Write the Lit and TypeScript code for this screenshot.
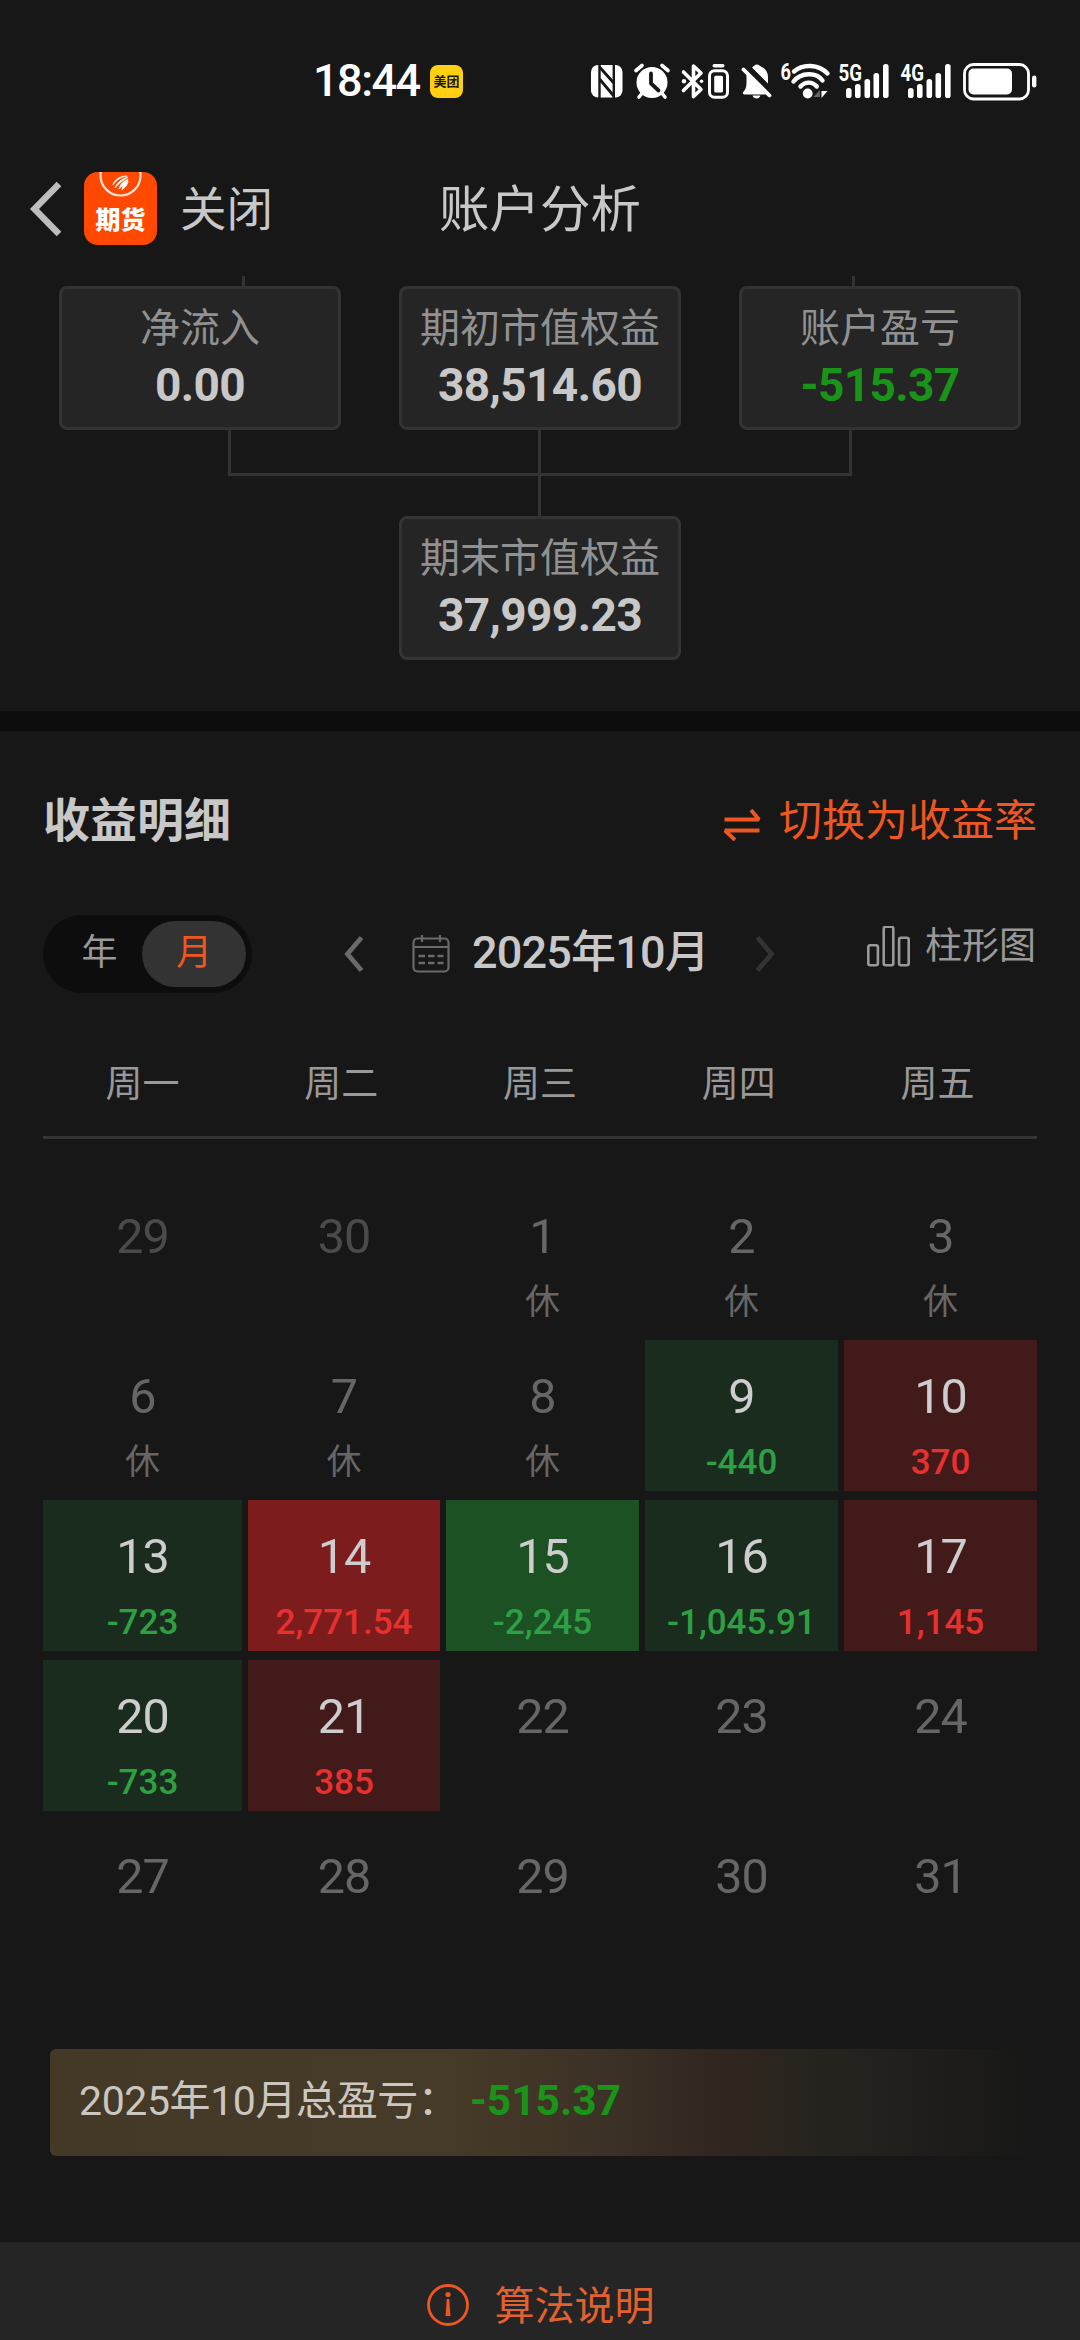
import { LitElement, html, svg, css } from "lit";
import { customElement, property } from "lit/decorators.js";
import { classMap } from "lit/directives/class-map.js";

type Tone = "faded" | "idle" | "up" | "up-strong" | "down" | "down-strong";

interface Day {
  day: number;
  tone: Tone;
  note?: string;
}

const WEEKDAYS = ["周一", "周二", "周三", "周四", "周五"];

const DAYS: Day[] = [
  { day: 29, tone: "faded" },
  { day: 30, tone: "faded" },
  { day: 1, tone: "idle", note: "休" },
  { day: 2, tone: "idle", note: "休" },
  { day: 3, tone: "idle", note: "休" },
  { day: 6, tone: "idle", note: "休" },
  { day: 7, tone: "idle", note: "休" },
  { day: 8, tone: "idle", note: "休" },
  { day: 9, tone: "down", note: "-440" },
  { day: 10, tone: "up", note: "370" },
  { day: 13, tone: "down", note: "-723" },
  { day: 14, tone: "up-strong", note: "2,771.54" },
  { day: 15, tone: "down-strong", note: "-2,245" },
  { day: 16, tone: "down", note: "-1,045.91" },
  { day: 17, tone: "up", note: "1,145" },
  { day: 20, tone: "down", note: "-733" },
  { day: 21, tone: "up", note: "385" },
  { day: 22, tone: "idle" },
  { day: 23, tone: "idle" },
  { day: 24, tone: "idle" },
  { day: 27, tone: "idle" },
  { day: 28, tone: "idle" },
  { day: 29, tone: "idle" },
  { day: 30, tone: "idle" },
  { day: 31, tone: "idle" },
];

@customElement("status-bar")
class StatusBar extends LitElement {
  static styles = css`
    :host {
      display: flex;
      align-items: center;
      box-sizing: border-box;
      height: 160px;
      padding: 2px 0 0 313px;
      color: #fff;
      font-family: Roboto, "Noto Sans CJK SC", sans-serif;
    }
    svg {
      display: block;
      flex: none;
      overflow: visible;
    }
    .clock {
      flex: none;
      width: 117px;
      font-size: 45px;
      font-weight: 500;
      line-height: 60px;
      letter-spacing: -1.5px;
      white-space: nowrap;
    }
    .badge {
      flex: none;
      width: 33px;
      height: 33px;
      margin-right: 128px;
      border-radius: 8px;
      background: #ffd012;
      color: #1d1a08;
      font-size: 13px;
      font-weight: 700;
      line-height: 34px;
      text-align: center;
      white-space: nowrap;
    }
    .tag {
      font-size: 24px;
      font-weight: 700;
    }
    .nfc { margin-right: 11px; }
    .alarm { margin-right: 12px; }
    .bt { margin-right: 4px; }
    .device { margin-right: 12px; }
    .bell { margin-right: 8px; }
    .wifi { margin-right: 9px; }
    .signal { margin-right: 11px; }
  `;

  private signal(label: string) {
    const bars = [
      [7, 27],
      [16, 23],
      [25.5, 18],
      [34.5, 12],
      [44, 3],
    ];
    return html`<svg class="signal" width="51" height="40" viewBox="0 0 51 40">
      ${bars.map(([x, y]) => svg`<rect x=${x} y=${y} width="5.6" height=${37 - y} rx="2.6" fill="#fff"/>`)}
      <text class="tag" x="-0.5" y="20" fill="#fff" textLength="23.5" lengthAdjust="spacingAndGlyphs">${label}</text>
    </svg>`;
  }

  render() {
    return html`
      <span class="clock">18:44</span>
      <span class="badge">美团</span>
      <svg class="nfc" width="32" height="40" viewBox="0 0 32 40">
        <rect x="0" y="4" width="31.5" height="32.5" rx="7" fill="#fff" />
        <path d="M8.5 3.5V37 M22.8 3.5V37" stroke="#171717" stroke-width="2.4" />
        <path d="M8.5 6 L22.8 22 M8.5 18 L22.8 35" stroke="#171717" stroke-width="2.8" />
      </svg>
      <svg class="alarm" width="36" height="40" viewBox="0 0 36 40">
        <circle cx="18" cy="21.5" r="15.5" fill="#fff" />
        <path d="M2 9.5 8 4.5 M34 9.5 28 4.5 M5 36l4-5 M31 36l-4-5" stroke="#fff" stroke-width="3.6" stroke-linecap="round" />
        <path d="M17 12.5v10l7.5 7" fill="none" stroke="#171717" stroke-width="3.8" stroke-linecap="round" />
      </svg>
      <svg class="bt" width="22" height="40" viewBox="0 0 22 40">
        <path d="M1.5 11 19 28.5 11.5 35.5V5L19 12 1.5 29.5" fill="none" stroke="#fff" stroke-width="3.6" stroke-linejoin="round" stroke-linecap="round" />
        <circle cx="2" cy="20.2" r="2.2" fill="#fff" />
        <circle cx="19.5" cy="20.2" r="1.8" fill="#fff" />
      </svg>
      <svg class="device" width="21" height="40" viewBox="0 0 21 40">
        <rect x="4.5" y="3" width="12" height="3.6" rx="1.8" fill="#fff" />
        <rect x="1.5" y="9.8" width="18" height="26.4" rx="5" fill="none" stroke="#fff" stroke-width="3" />
        <rect x="6.2" y="14.8" width="8.8" height="16.6" rx="1.5" fill="#fff" />
      </svg>
      <svg class="bell" width="31" height="40" viewBox="0 0 31 40">
        <path d="M11 6.5c2-1.3 2.6-3 5-3 1.8 0 2.6 1.2 3.5 1.7 5 2 7.5 5.8 7.5 10.8v6.5z" fill="#fff" />
        <path d="M5.5 12.5 25 33.5H3.5c-1.5 0-2.2-1.5-1.2-2.6 2.3-2.6 3.2-5.4 3.2-9z" fill="#fff" />
        <path d="M11.5 34.5h8c-.6 2-2 3-4 3s-3.4-1-4-3z" fill="#fff" />
        <path d="M2.5 8.5 28.5 34.5" stroke="#fff" stroke-width="3.8" stroke-linecap="round" />
      </svg>
      <svg class="wifi" width="50" height="40" viewBox="0 0 50 40">
        <text class="tag" x="0.5" y="18.5" fill="#fff" textLength="10.5" lengthAdjust="spacingAndGlyphs">6</text>
        <path d="M14 10.5C22.5 2.8 38.5 2.8 47.5 12.5 M13.5 20.5C21 11 36.5 11 42.5 19.5 M20.5 25.5c4.3-5.2 12-5.2 16.3 0" fill="none" stroke="#fff" stroke-width="4.4" stroke-linecap="round" />
        <circle cx="27.7" cy="32.5" r="4.9" fill="#fff" />
        <path d="M33.5 36 40 29v7z" fill="#666" />
        <path d="M41.5 30h6l-6 7z" fill="#fff" />
      </svg>
      ${this.signal("5G")} ${this.signal("4G")}
      <svg width="74" height="40" viewBox="0 0 74 40">
        <rect x="1.5" y="3.5" width="64" height="34.5" rx="9" fill="none" stroke="#fff" stroke-width="2.8" />
        <rect x="5.5" y="7.5" width="43.5" height="26" rx="5" fill="#fff" />
        <rect x="69" y="14.5" width="4.4" height="12" rx="2.2" fill="#fff" />
      </svg>
    `;
  }
}

@customElement("value-card")
class ValueCard extends LitElement {
  @property() label = "";
  @property() value = "";
  @property({ type: Boolean }) negative = false;

  static styles = css`
    :host {
      display: block;
      box-sizing: border-box;
      width: 282px;
      height: 144px;
      padding-top: 13px;
      border: 3px solid #333;
      border-radius: 8px;
      background: #252525;
      text-align: center;
      font-family: Roboto, "Noto Sans CJK SC", sans-serif;
      white-space: nowrap;
    }
    .label {
      font-size: 40px;
      line-height: 54px;
      color: #919191;
    }
    .value {
      font-size: 46px;
      font-weight: 700;
      line-height: 58px;
      letter-spacing: -0.6px;
      color: #c8c8c8;
    }
    .negative {
      color: #1a9418;
    }
  `;

  render() {
    return html`
      <div class="label">${this.label}</div>
      <div class=${classMap({ value: true, negative: this.negative })}>${this.value}</div>
    `;
  }
}

@customElement("day-cell")
class DayCell extends LitElement {
  @property({ attribute: false }) data!: Day;

  static styles = css`
    :host {
      display: block;
      min-width: 0;
    }
    .cell {
      box-sizing: border-box;
      height: 151px;
      padding-top: 27px;
      text-align: center;
      white-space: nowrap;
      font-family: Roboto, "Noto Sans CJK SC", sans-serif;
      color: #666;
    }
    .num {
      font-size: 48.5px;
      line-height: 60px;
      letter-spacing: -1px;
    }
    .note {
      margin-top: 11px;
      font-size: 35px;
      line-height: 50px;
    }
    .faded { color: #4a4a4a; }
    .up, .up-strong, .down, .down-strong { color: #cdcdcd; }
    .up { background: #421a1a; }
    .up-strong { background: #7c1c1d; }
    .down { background: #1a2c1d; }
    .down-strong { background: #1c5124; }
    .up .note, .up-strong .note { color: #e8302f; font-weight: 500; }
    .down .note, .down-strong .note { color: #2ea044; font-weight: 500; }
  `;

  render() {
    const { day, tone, note } = this.data;
    return html`<div class="cell ${tone}">
      <div class="num">${day}</div>
      ${note ? html`<div class="note">${note}</div>` : null}
    </div>`;
  }
}

@customElement("app-root")
class AppRoot extends LitElement {
  static styles = css`
    :host {
      display: flex;
      flex-direction: column;
      width: 1080px;
      height: 2340px;
      overflow: hidden;
      background: #171717;
      color: #c8c8c8;
      font-family: Roboto, "Noto Sans CJK SC", sans-serif;
      white-space: nowrap;
    }
    svg {
      display: block;
      flex: none;
    }
    .nav {
      display: grid;
      grid-template-columns: 1fr auto 1fr;
      align-items: center;
      height: 97px;
      padding: 0 28px;
    }
    .nav-left {
      display: flex;
      align-items: center;
    }
    .app-icon { margin: 0 23px 0 20px; }
    .app-name { font-size: 25px; font-weight: 900; }
    .close {
      padding-top: 3px;
      font-size: 46.5px;
      line-height: 60px;
    }
    .title {
      padding-top: 3px;
      font-size: 50.5px;
      line-height: 64px;
    }
    .tree {
      display: flex;
      flex-direction: column;
      align-items: center;
      padding: 19px 0 51px;
    }
    .cards {
      display: flex;
      gap: 58px;
    }
    .divider {
      height: 20px;
      background: #0d0d0d;
    }
    .detail {
      display: flex;
      flex-direction: column;
      padding: 58px 43px 0;
    }
    .heading {
      display: flex;
      align-items: center;
      justify-content: space-between;
      height: 64px;
    }
    .heading-text {
      font-size: 47px;
      font-weight: 700;
      line-height: 64px;
    }
    .switch {
      display: flex;
      align-items: center;
      gap: 18px;
      color: #ee5622;
      font-size: 43px;
      line-height: 64px;
    }
    .switch-icon { margin-top: 5px; }
    .controls {
      display: flex;
      align-items: center;
      height: 78px;
      margin-top: 62px;
    }
    .toggle {
      display: flex;
      box-sizing: border-box;
      width: 209px;
      height: 78px;
      padding: 6px;
      border-radius: 39px;
      background: #0d0d0d;
      font-size: 36px;
      line-height: 65px;
      text-align: center;
    }
    .option {
      flex: 1;
      padding-left: 8px;
      color: #999;
    }
    .option.active {
      flex: none;
      width: 104px;
      padding-left: 0;
      border-radius: 33px;
      background: #333;
      color: #ee5622;
    }
    .prev { margin-left: 92px; }
    .calendar { margin: 0 22px 0 48px; }
    .month {
      width: 230px;
      font-size: 45px;
      line-height: 60px;
      font-weight: 500;
      letter-spacing: -0.8px;
      padding-bottom: 2px;
    }
    .next { margin-left: 53px; }
    .chart {
      display: flex;
      align-items: center;
      align-self: flex-start;
      gap: 15px;
      height: 63px;
      margin-left: auto;
      margin-right: 1px;
      color: #999;
      font-size: 37px;
      line-height: 60px;
    }
    .weekdays {
      display: grid;
      grid-template-columns: repeat(5, 1fr);
      margin-top: 67px;
      padding-bottom: 26px;
      border-bottom: 3px solid #333;
      font-size: 37px;
      line-height: 50px;
      color: #999;
      text-align: center;
    }
    .days {
      display: grid;
      grid-template-columns: 199px 192px repeat(3, 193px);
      gap: 9px 6px;
      margin-top: 41px;
    }
    .summary {
      display: flex;
      box-sizing: border-box;
      height: 107px;
      margin: 78px 45px 86px 50px;
      padding: 22px 0 0 29px;
      border-radius: 6px;
      background: linear-gradient(90deg, #443927 0%, #463a28 40%, #3c3126 57%, #30261f 68%, #25231e 80%, #171717 100%);
      font-size: 41px;
      line-height: 60px;
    }
    .summary-label {
      width: 391px;
      letter-spacing: -0.4px;
      color: #cbc7c0;
    }
    .summary-value {
      font-weight: 700;
      font-size: 42.5px;
      color: #1a9418;
    }
    .footer {
      display: flex;
      flex: 1;
      align-items: flex-start;
      justify-content: center;
      gap: 25px;
      box-sizing: border-box;
      padding: 34px 0 0;
      background: #252525;
      color: #e3602f;
      font-size: 40px;
      line-height: 60px;
    }
    .info { margin-top: 7px; }
    .info-label { padding-top: 1px; }
  `;

  render() {
    return html`
      <status-bar></status-bar>

      <header class="nav">
        <div class="nav-left">
          <svg width="36" height="60" viewBox="0 0 36 60">
            <path d="M31 5 6.5 30 31 55" fill="none" stroke="#bdbdbd" stroke-width="6.5" />
          </svg>
          <svg class="app-icon" width="73" height="73" viewBox="0 0 73 73">
            <defs><clipPath id="tile"><rect width="73" height="73" rx="14" /></clipPath></defs>
            <g clip-path="url(#tile)">
              <rect width="73" height="73" fill="#ff4800" />
              <circle cx="36.5" cy="3.5" r="20" fill="none" stroke="#ffe3d6" stroke-width="2.2" />
              <path d="M29 13c1-5 6-9 14-9-6 1-11 4-14 9z M31 16c2-5 6-9 13-11-4 3-9 6-13 11z M35 17c1-5 5-8 9-10-1 4-5 6-9 10z M38 18c0-4 3-7 6-9 0 4-3 6-6 9z" fill="#fff" stroke="#fff" stroke-width=".7" />
            </g>
            <text class="app-name" x="36.500" y="57" text-anchor="middle" fill="#fff">期货</text>
          </svg>
          <span class="close">关闭</span>
        </div>
        <span class="title">账户分析</span>
        <span></span>
      </header>

      <section class="tree">
        <svg width="962" height="10" viewBox="0 0 962 10">
          <path d="M184.5 0V10 M794.5 0V10" stroke="#333" stroke-width="3" />
        </svg>
        <div class="cards">
          <value-card label="净流入" value="0.00"></value-card>
          <value-card label="期初市值权益" value="38,514.60"></value-card>
          <value-card label="账户盈亏" value="-515.37" negative></value-card>
        </div>
        <svg width="962" height="86" viewBox="0 0 962 86">
          <path d="M170.5 0V44.5H791.5V0 M480.5 0V86" fill="none" stroke="#333" stroke-width="3" />
        </svg>
        <value-card label="期末市值权益" value="37,999.23"></value-card>
      </section>

      <div class="divider"></div>

      <section class="detail">
        <div class="heading">
          <span class="heading-text">收益明细</span>
          <span class="switch">
            <svg class="switch-icon" width="38" height="34" viewBox="0 0 38 34">
              <path d="M1.5 12.5H36L28 3 M36.5 23.500H2L12 33" fill="none" stroke="#ee5622" stroke-width="3.8" stroke-linejoin="bevel" />
            </svg>
            切换为收益率
          </span>
        </div>

        <div class="controls">
          <div class="toggle">
            <span class="option">年</span>
            <span class="option active">月</span>
          </div>
          <svg class="prev" width="20" height="38" viewBox="0 0 20 38">
            <path d="M17.5 2.5 3.5 19 17.5 35.5" fill="none" stroke="#6a6a6a" stroke-width="4.8" />
          </svg>
          <svg class="calendar" width="38" height="40" viewBox="0 0 38 40">
            <g fill="none" stroke="#6a6a6a" stroke-width="2.2">
              <rect x="1.5" y="4.5" width="35" height="33" rx="4" />
              <path d="M1.5 13H36.5 M10 1V8 M28 1V8" />
              <path d="M6.5 22h6.5M16 22h6.5M25.5 22h6M6.5 29h6.5M16 29h6.5M25.5 29h6" stroke-width="2.6" />
            </g>
          </svg>
          <span class="month">2025年10月</span>
          <svg class="next" width="20" height="38" viewBox="0 0 20 38">
            <path d="M2.5 2.5 16.5 19 2.5 35.5" fill="none" stroke="#333" stroke-width="4.8" />
          </svg>
          <span class="chart">
            <svg width="43" height="42" viewBox="0 0 43 42">
              <g fill="none" stroke="#999" stroke-width="2.6">
                <rect x="1.3" y="19.3" width="9.6" height="20" rx="2" />
                <rect x="16.7" y="0.8" width="9.6" height="38.5" rx="2" />
                <rect x="32.1" y="11.8" width="9.6" height="27.5" rx="2" />
              </g>
            </svg>
            柱形图
          </span>
        </div>

        <div class="weekdays">${WEEKDAYS.map((w) => html`<span>${w}</span>`)}</div>
        <div class="days">${DAYS.map((d) => html`<day-cell .data=${d}></day-cell>`)}</div>
      </section>

      <div class="summary">
        <span class="summary-label">2025年10月总盈亏：</span>
        <span class="summary-value">-515.37</span>
      </div>

      <footer class="footer">
        <svg class="info" width="44" height="44" viewBox="0 0 44 44">
          <circle cx="22" cy="22" r="19.5" fill="none" stroke="#ee5622" stroke-width="2.8" />
          <circle cx="22" cy="11.5" r="2.6" fill="#ee5622" />
          <path d="M20.8 16h2.4l1.3 17h-5z" fill="#ee5622" />
        </svg>
        <span class="info-label">算法说明</span>
      </footer>
    `;
  }
}
